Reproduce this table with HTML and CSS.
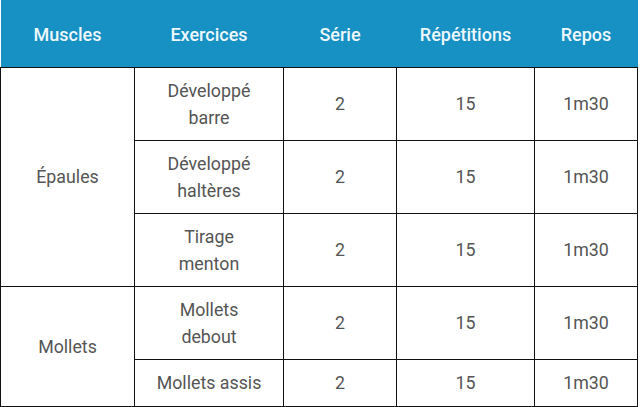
FILE: index.html
```html
<!DOCTYPE html>
<html lang="fr">
<head>
<meta charset="utf-8">
<link rel="stylesheet" href="styles.css">
</head>
<body>
<table class="plan">
  <colgroup>
    <col class="c1"><col class="c2"><col class="c3"><col class="c4"><col class="c5">
  </colgroup>
  <thead>
    <tr><th>Muscles</th><th>Exercices</th><th>Série</th><th>Répétitions</th><th>Repos</th></tr>
  </thead>
  <tbody>
    <tr class="tall"><td rowspan="3">Épaules</td><td>Développé<br>barre</td><td>2</td><td>15</td><td>1m30</td></tr>
    <tr class="tall"><td>Développé<br>haltères</td><td>2</td><td>15</td><td>1m30</td></tr>
    <tr class="tall"><td>Tirage<br>menton</td><td>2</td><td>15</td><td>1m30</td></tr>
    <tr class="tall"><td rowspan="2">Mollets</td><td>Mollets<br>debout</td><td>2</td><td>15</td><td>1m30</td></tr>
    <tr class="short"><td>Mollets assis</td><td>2</td><td>15</td><td>1m30</td></tr>
  </tbody>
</table>
</body>
</html>
```
FILE: styles.css
```css
html, body { margin: 0; padding: 0; background: #fff; }
.plan {
  border-collapse: collapse;
  width: 637px;
  table-layout: fixed;
  font-family: Roboto, "Liberation Sans", sans-serif;
}
.c1 { width: 134px; }
.c2 { width: 149px; }
.c3 { width: 113px; }
.c4 { width: 138px; }
.c5 { width: 103px; }
.plan th {
  background: #1790c4;
  color: #eef8fc;
  font-weight: 500;
  font-size: 18px;
  height: 67px;
  padding: 3px 0 0;
  box-sizing: border-box;
  text-align: center;
  vertical-align: middle;
}
.plan td {
  border: 1px solid #111;
  color: #555;
  font-size: 17.8px;
  line-height: 27px;
  text-align: center;
  vertical-align: middle;
  padding: 0;
}
.plan tr.tall { height: 73px; }
.plan tr.short { height: 47px; }
```
